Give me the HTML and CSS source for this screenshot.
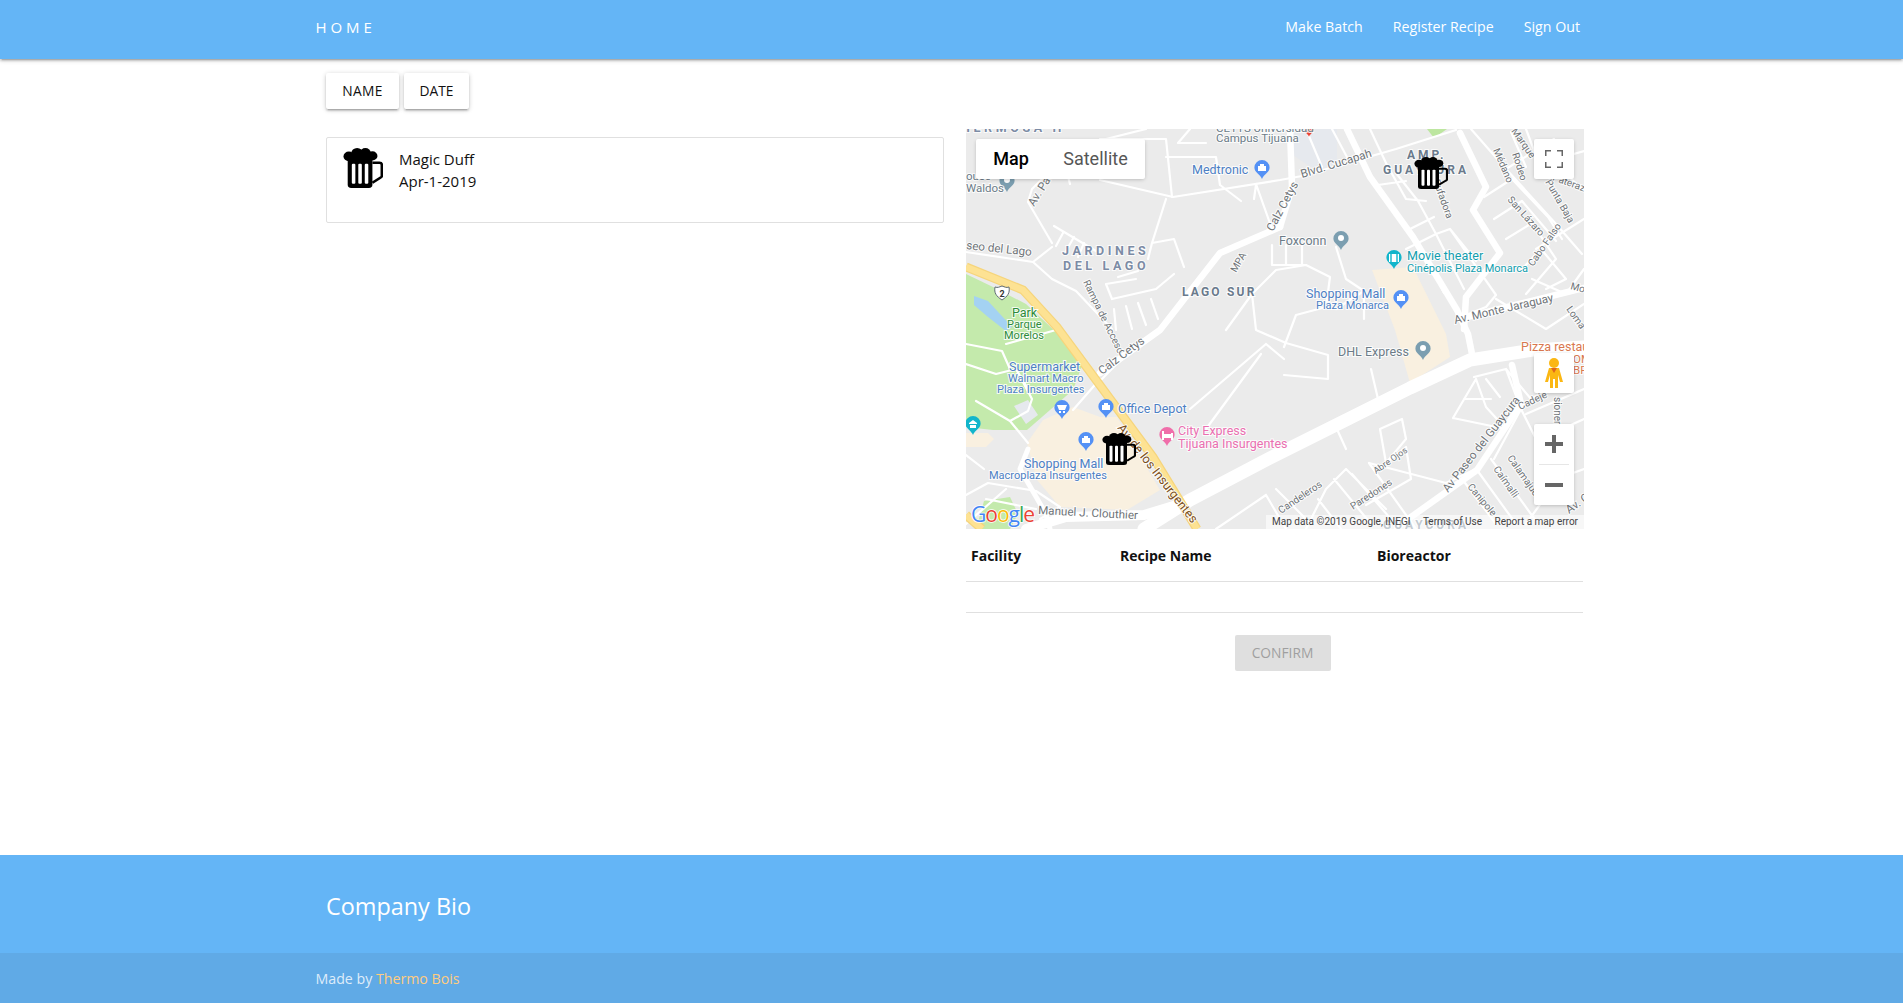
FILE: index.html
```html
<!DOCTYPE html>
<html lang="en">
<head>
<meta charset="utf-8">
<title>Home</title>
<link rel="stylesheet" href="styles.css">
</head>
<body>
<svg class="defs" width="0" height="0" aria-hidden="true">
  <symbol id="beer" viewBox="0 0 34 38" preserveAspectRatio="none">
    <circle cx="5" cy="8" r="4.6"/><circle cx="12" cy="5" r="5"/><circle cx="19" cy="4.6" r="4.6"/><circle cx="25" cy="7.5" r="4.3"/>
    <rect x="4" y="7" width="21" height="31" rx="3"/>
    <rect class="slat" x="7.5" y="15" width="3" height="19" rx="1"/>
    <rect class="slat" x="13" y="15" width="3" height="19" rx="1"/>
    <rect class="slat" x="18.5" y="15" width="3" height="19" rx="1"/>
    <path class="handle" d="M25 14h6a2 2 0 0 1 2 2v10a2 2 0 0 1-1 2l-7 5"/>
  </symbol>
  <symbol id="pin" viewBox="-8 -8 16 20" overflow="visible">
    <path d="M0-8a7.6 7.6 0 0 1 7.6 7.6C7.600 4.600 2 6 0 11-2 6-7.600 4.600-7.600-.4A7.600 7.600 0 0 1 0-8z"/>
  </symbol>
</svg>

<nav class="nav">
  <div class="nav-inner">
    <a class="brand">HOME</a>
    <ul class="nav-links">
      <li>Make Batch</li>
      <li>Register Recipe</li>
      <li>Sign Out</li>
    </ul>
  </div>
</nav>

<main class="main">
  <div class="sort-row">
    <button class="btn">NAME</button>
    <button class="btn">DATE</button>
  </div>
  <div class="columns">
    <section class="left">
      <article class="card">
        <svg class="card-icon"><use href="#beer"/></svg>
        <div class="card-text">
          <div>Magic Duff</div>
          <div>Apr-1-2019</div>
        </div>
      </article>
    </section>
    <section class="right">
      <div class="map">
        <svg class="map-art" viewBox="0 0 618 400" width="618" height="400">
          <rect class="land" width="618" height="400"/>
          <path class="park" d="M0 145 27 158 60 175 91 204 117 234 107 261 61 301 27 301 0 298z"/>
          <path class="park" d="M18 372 44 368 52 385 44 400H10z"/>
          <path class="campus" d="M324 0H371V40L345 38 324 24z"/>
          <path class="parkb" d="M461 0H481L468 9z"/>
          <path class="mall" d="M61 314 77 291 107 278 134 288 151 288 194 361 161 381 94 378 71 351z"/>
          <path class="mall" d="M406 141 447 138 480 205 484 228 444 254 429 201z"/>
          <path class="mall" d="M0 304H22L28 310 20 318H0z"/>
          <path class="water" d="M8 167 22 172 46 198 40 202 22 188 8 176z"/>
          <path class="campus" d="M48 277 62 271 72 286 60 295z"/>

          <g class="road r2">
            <path d="M134 51 207 68 314 51 336 47 430 20 490 1"/>
            <path d="M62 73 86 114M62 73 66 60 78 48 100 40"/>
            <path d="M0 123 67 133 86 118M67 133 86 150 110 162 146 200"/>
            <path d="M100 40 104 55M200 70 186 114 182 130M186 114 208 110 218 138"/>
            <path d="M134 10H200L206 68M200 28H250L254 56 275 72M140 10 180 0M136 20 172 15"/>
            <path d="M290 55 306 100M290 56 288 70M224 0 212 14H240"/>
            <path d="M88 97 130 122M97 104 90 117M108 108 100 122M118 114 112 128"/>
            <path d="M146 170 190 160 208 145M148 180 150 201M160 177 166 200M172 174 180 196M185 170 192 190"/>
            <path d="M146 170 140 155 170 150M152 148 172 142"/>
            <path d="M260 201 286 165 310 141 340 136 364 148 360 178 330 186 318 218M286 165 290 201 320 214 362 226 362 250 318 246"/>
            <path d="M340 136H306V116M320 116V136M336 115V136"/>
            <path d="M370 118 380 150 398 162 398 190M398 162 370 180"/>
            <path d="M0 215 36 222 44 240M0 235 30 245 50 240 62 260M50 240 66 270 62 282 44 292 10 272"/>
            <path d="M40 215 90 201M107 281 134 250M62 314 44 292"/>
            <path d="M0 326 18 340M74 390 94 378 70 362 22 354 0 366M20 370 70 380"/>
            <path d="M224 280 300 215M300 215 318 230M240 300 295 225"/>
            <path d="M340 0 356 38M366 0 382 30M404 0 420 34 440 70 460 72M412 56 440 52M430 44 452 72 470 105M444 100 468 88M440 120 470 105 484 100 530 166 520 178 495 188M470 105 498 160M452 112 478 164M484 100 510 132"/>
            <path d="M505 0 540 40 590 95 616 125M540 40 588 10M545 3 560 38M560 0 572 32M518 68 546 50 582 88 596 110M528 90 556 72 590 112M540 110 566 94 590 130 560 165M556 140 575 120 600 150 580 160"/>
            <path d="M590 30 618 22M600 45 618 62M570 120 618 90M566 150 600 165 618 140M530 170 580 200 618 175"/>
            <path d="M250 400 300 366M340 400 360 360 380 340 420 380M368 350 405 395M386 345 430 396M403 334 450 400M352 370 375 400M300 366 320 400M310 360 345 395"/>
            <path d="M420 334 440 318 445 350 400 376M420 334 414 300 436 290 440 310 420 334"/>
            <path d="M403 334 480 354 510 340"/>
            <path d="M487 289 510 250 520 278 540 300 487 289M498 270 525 270M508 248 540 240 565 270 600 250M520 250 534 268M540 240 555 280 590 350 618 340M560 285 618 260M574 310 618 290M528 330 555 280M575 225H618M585 225 600 245"/>
            <path d="M511 341 550 395M525 330 570 392M496 350 530 395M588 356 560 395"/>
            <path d="M0 395 40 360M370 298 380 320M405 240 412 270M136 250 170 215"/>
          </g>
          <g class="road r8">
            <path d="M381 0 404 48 447 108 491 181 502 205 506 225"/>
            <path d="M134 244 194 201 254 124 314 98"/>
            <path d="M494 4 520 58 507 81 534 124 500 168 498 200"/>
            <path d="M501 188 618 159"/>
            <path d="M431 398 511 341 555 275 546 236"/>
            <path d="M314 98 326 58 324 0"/>
          </g>
          <path class="road r14" d="M178 400 224 371 304 329 444 259 504 231 567 221 618 218"/>
          <path class="road r5" d="M62 320 54 340 80 385 84 400"/>
          <path class="road r10" d="M60 400 100 388 178 386 224 372"/>
          <path class="yellow-edge" d="M0 138 57 161 91 198 187 328 231 400"/>
          <path class="yellow" d="M0 138 57 161 91 198 187 328 231 400"/>
          <path class="yellow-edge" d="M0 386 16 400"/>
          <path class="yellow" d="M0 386 16 400"/>

          <g class="pins">
            <use class="pin-grey" href="#pin" x="33" y="44" width="16" height="20"/>
            <use class="pin-red" href="#pin" x="338" y="-8" width="10" height="20"/>
            <use class="pin-blue" href="#pin" x="288" y="31" width="16" height="20"/>
            <use class="pin-grey" href="#pin" x="367" y="102" width="16" height="20"/>
            <use class="pin-teal" href="#pin" x="420" y="121" width="16" height="20"/>
            <use class="pin-blue" href="#pin" x="427" y="161" width="16" height="20"/>
            <use class="pin-grey" href="#pin" x="449" y="212" width="16" height="20"/>
            <use class="pin-blue" href="#pin" x="88" y="271" width="16" height="20"/>
            <use class="pin-blue" href="#pin" x="132" y="270" width="16" height="20"/>
            <use class="pin-blue" href="#pin" x="112" y="303" width="16" height="20"/>
            <use class="pin-pink" href="#pin" x="193" y="298" width="16" height="20"/>
            <use class="pin-teal" href="#pin" x="-1" y="287" width="16" height="20"/>
            <path class="glyph" d="M292 37h8v5h-8zM294 37v-2h4v2"/>
            <path class="glyph" d="M431 167h8v5h-8zM433 167v-2h4v2"/>
            <path class="glyph" d="M136 276h8v5h-8zM138 276v-2h4v2"/>
            <path class="glyph" d="M116 309h8v5h-8zM118 309v-2h4v2"/>
            <path class="glyph" d="M91 276h10l-2 5h-6zM93 282h2v2h-2zM97 282h2v2h-2z"/>
            <path class="glyph" d="M423 125h10v8h-10z"/>
            <path class="glyph-teal" d="M425 125v8M431 125v8"/>
            <circle class="glyph" cx="375" cy="109" r="3"/>
            <circle class="glyph" cx="41" cy="51" r="3"/>
            <circle class="glyph" cx="457" cy="219" r="3"/>
            <path class="glyph" d="M196 302h2v3h7v-1h2v7h-2v-2h-7v2h-2z"/>
            <path class="glyph" d="M3 294 7 291l4 3v1H3zM4 296h6v3H4z"/>
          </g>
          <g class="shield">
            <path d="M29 158c3 1 4 0 7-1 3 1 4 2 7 1 1 6-1 9-7 13-6-4-8-7-7-13z"/>
            <text class="t-shield" x="36" y="168">2</text>
          </g>

          <g class="labels">
            <text class="t-area" x="-5" y="3">HERMOSA H</text>
            <text class="t-grey s11" x="250" y="3">CETYS Universidad</text>
            <text class="t-grey s11" x="250" y="13">Campus Tijuana</text>
            <text class="t-grey s11" x="0" y="51">ouse</text>
            <text class="t-grey s11" x="0" y="63">Waldos</text>
            <text class="t-area" x="96" y="126">JARDINES</text>
            <text class="t-area" x="97" y="141">DEL LAGO</text>
            <text class="t-area2" x="216" y="167">LAGO SUR</text>
            <text class="t-area2 wide" x="441" y="30">AMP.</text>
            <text class="t-area2 wide" x="417" y="45">GUAYCURA</text>
            <text class="t-blue" x="226" y="45">Medtronic</text>
            <text class="t-slate" x="313" y="116">Foxconn</text>
            <text class="t-teal" x="441" y="131">Movie theater</text>
            <text class="t-teal s115" x="441" y="143">Cinépolis Plaza Monarca</text>
            <text class="t-blue" x="340" y="169">Shopping Mall</text>
            <text class="t-blue s115" x="350" y="180">Plaza Monarca</text>
            <text class="t-slate" x="372" y="227">DHL Express</text>
            <text class="t-orange" x="555" y="222">Pizza restaurant</text>
            <text class="t-orange s11" x="607" y="234">OM</text>
            <text class="t-orange s11" x="607" y="245">BR</text>
            <text class="t-green" x="46" y="188">Park</text>
            <text class="t-green s115" x="41" y="199">Parque</text>
            <text class="t-green s115" x="38" y="210">Morelos</text>
            <text class="t-blue" x="43" y="242">Supermarket</text>
            <text class="t-blue s115" x="42" y="253">Walmart Macro</text>
            <text class="t-blue s115" x="31" y="264">Plaza Insurgentes</text>
            <text class="t-blue" x="152" y="284">Office Depot</text>
            <text class="t-pink" x="212" y="306">City Express</text>
            <text class="t-pink" x="212" y="319">Tijuana Insurgentes</text>
            <text class="t-blue" x="58" y="339">Shopping Mall</text>
            <text class="t-blue s115" x="23" y="350">Macroplaza Insurgentes</text>
            <text class="t-brown" transform="translate(151 299) rotate(52)">Av. de los Insurgentes</text>
            <text class="t-road" transform="translate(68 78) rotate(-58)">Av. Paso</text>
            <text class="t-road" transform="translate(0 120) rotate(6)">seo del Lago</text>
            <text class="t-road s10" transform="translate(117 153) rotate(64)">Rampa de Acceso</text>
            <text class="t-road s10" transform="translate(270 144) rotate(-60)">MPA</text>
            <text class="t-road" transform="translate(136 246) rotate(-37)">Calz Cetys</text>
            <text class="t-road" transform="translate(307 103) rotate(-62)">Calz Cetys</text>
            <text class="t-road" transform="translate(336 49) rotate(-17)">Blvd. Cucapah</text>
            <text class="t-road" transform="translate(489 195) rotate(-13)">Av. Monte Jaraguay</text>
            <text class="t-road s10" transform="translate(527 21) rotate(67)">Médano</text>
            <text class="t-road s10" transform="translate(546 25) rotate(72)">Rodeo</text>
            <text class="t-road s10" transform="translate(541 71) rotate(48)">San Lázaro</text>
            <text class="t-road s10" transform="translate(579 53) rotate(60)">Punta Baja</text>
            <text class="t-road s10" transform="translate(567 138) rotate(-55)">Cabo Falso</text>
            <text class="t-road s10" transform="translate(467 52) rotate(70)">Bufadora</text>
            <text class="t-road s10" transform="translate(586 51) rotate(20)">Paterazo</text>
            <text class="t-road s10" transform="translate(545 2) rotate(55)">Marque</text>
            <text class="t-road s10" transform="translate(604 160) rotate(15)">Mo</text>
            <text class="t-road s10" transform="translate(600 180) rotate(55)">Loma</text>
            <text class="t-road" transform="translate(482 364) rotate(-52)">Av Paseo del Guaycura</text>
            <text class="t-road s10" transform="translate(554 281) rotate(-25)">Cadeje</text>
            <text class="t-road s10" transform="translate(541 329) rotate(55)">Calamajué</text>
            <text class="t-road s10" transform="translate(527 340) rotate(55)">Caímalli</text>
            <text class="t-road s10" transform="translate(501 358) rotate(50)">Canipole</text>
            <text class="t-road s10" transform="translate(387 381) rotate(-33)">Paredones</text>
            <text class="t-road s9" transform="translate(410 345) rotate(-35)">Abre Ojos</text>
            <text class="t-road s10" transform="translate(315 385) rotate(-34)">Candeleros</text>
            <text class="t-road s10" transform="translate(588 268) rotate(90)">sioneros</text>
            <text class="t-road" transform="translate(603 385) rotate(-35)">Av. Coc</text>
            <text class="t-road" transform="translate(72 385) rotate(3)">Manuel J. Clouthier</text>
            <text class="t-area2 wide" x="417" y="400">GUAYCURA</text>
          </g>
          <text class="google" x="5" y="393"><tspan class="g-b">G</tspan><tspan class="g-r">o</tspan><tspan class="g-y">o</tspan><tspan class="g-b">g</tspan><tspan class="g-g">l</tspan><tspan class="g-r">e</tspan></text>
        </svg>

        <svg class="marker marker-a"><use href="#beer"/></svg>
        <svg class="marker marker-b"><use href="#beer"/></svg>

        <div class="map-type">
          <span class="type-on">Map</span>
          <span class="type-off">Satellite</span>
        </div>
        <div class="ctrl ctrl-full">
          <svg viewBox="0 0 18 18" width="18" height="18"><path class="ctrl-ico" d="M0 6V0H6M12 0H18V6M18 12V18H12M6 18H0V12" /></svg>
        </div>
        <div class="ctrl ctrl-peg">
          <svg viewBox="0 0 18 30" width="18" height="30">
            <circle class="peg" cx="9" cy="5" r="5"/>
            <path class="peg" d="M4 10h10l4 14h-3l-2-7v13h-3v-9H8v9H5V17l-2 7H0z"/>
            <path class="peg-neck" d="M6 10h6l-3 5z"/>
          </svg>
        </div>
        <div class="ctrl ctrl-zoom">
          <button class="zoom-btn"><svg viewBox="0 0 18 18" width="18" height="18"><path class="ctrl-solid" d="M7 0h4v7h7v4h-7v7H7v-7H0V7h7z"/></svg></button>
          <span class="zoom-sep"></span>
          <button class="zoom-btn"><svg viewBox="0 0 18 18" width="18" height="18"><path class="ctrl-solid" d="M0 7h18v4H0z"/></svg></button>
        </div>
        <div class="attrib">
          <span>Map data ©2019 Google, INEGI</span>
          <span>Terms of Use</span>
          <span>Report a map error</span>
        </div>
      </div>

      <table class="table">
        <thead>
          <tr><th class="c1">Facility</th><th class="c2">Recipe Name</th><th>Bioreactor</th></tr>
        </thead>
        <tbody>
          <tr><td></td><td></td><td></td></tr>
        </tbody>
      </table>
      <div class="confirm-row"><button class="btn-disabled" disabled>CONFIRM</button></div>
    </section>
  </div>
</main>

<footer class="footer">
  <div class="footer-main"><h5 class="bio">Company Bio</h5></div>
  <div class="copyright">Made by <a class="credit">Thermo Bois</a></div>
</footer>
</body>
</html>
```
FILE: styles.css
```css
* { box-sizing: border-box; }
html, body { margin: 0; padding: 0; }
body {
  width: 1903px;
  height: 1003px;
  overflow: hidden;
  display: flex;
  flex-direction: column;
  background: #fff;
  color: #111;
  font-family: "Open Sans", "Noto Sans", sans-serif;
  font-size: 14.2px;
}
.defs { position: absolute; }

.nav {
  flex: none;
  height: 59px;
  background: #64b5f6;
  box-shadow: 0 2px 2px 0 rgba(0,0,0,.14), 0 3px 1px -2px rgba(0,0,0,.12), 0 1px 5px 0 rgba(0,0,0,.2);
  color: #fff;
}
.nav-inner {
  height: 53px;
  padding: 0 323px 0 315.5px;
  display: flex;
  align-items: center;
  justify-content: space-between;
}
.brand { font-size: 15px; letter-spacing: 3.9px; }
.nav-links { list-style: none; margin: 0; padding: 0; display: flex; gap: 30px; }

.main {
  flex: 1;
  padding: 14px 0 0 326px;
}
.sort-row { display: flex; gap: 5px; height: 36px; }
.btn {
  height: 36px;
  padding: 0 0 1px;
  border: 0;
  border-radius: 2px;
  background: #fff;
  color: #111;
  font: inherit;
  font-size: 13.8px;
  box-shadow: 0 2px 2px 0 rgba(0,0,0,.14), 0 3px 1px -2px rgba(0,0,0,.12), 0 1px 5px 0 rgba(0,0,0,.2);
}
.btn:first-child { width: 73px; letter-spacing: .3px; }
.btn:last-child { width: 65px; }
.columns {
  display: grid;
  grid-template-columns: 618px 618px;
  gap: 22px;
  padding-top: 20px;
}
.left { padding-top: 8px; }
.card {
  height: 86px;
  border: 1px solid #e0e0e0;
  border-radius: 2px;
  display: flex;
  padding: 10px 16px;
  gap: 16px;
}
.card-icon { width: 40px; height: 40px; flex: none; }
.card-text { line-height: 22px; font-size: 15px; }
.slat { fill: #fff; }
.handle { fill: none; stroke: #000; stroke-width: 2.2; }

.map { position: relative; width: 618px; height: 400px; overflow: hidden; }
.map-art { display: block; font-family: Roboto, sans-serif; }
.marker { position: absolute; width: 34px; height: 32px; }
.marker-a { left: 448px; top: 28px; }
.marker-b { left: 136px; top: 304px; }

.land { fill: #ebebeb; }
.park { fill: #c4eaac; }
.parkb { fill: #bde6a0; }
.mall { fill: #f9f0e0; }
.campus { fill: #e6e9ee; }
.water { fill: #a4d2f2; }
.road { fill: none; stroke: #fff; stroke-linejoin: round; stroke-linecap: round; }
.r2 path { stroke-width: 2.2; }
.r5 { stroke-width: 5; }
.r8 { stroke-width: 6.5; }
.r10 { stroke-width: 10; }
.r14 { stroke-width: 13; }
.yellow { fill: none; stroke: #fde293; stroke-width: 6.5; }
.yellow-edge { fill: none; stroke: #f6d57c; stroke-width: 9; }
.pin-grey { fill: #7b9eb0; }
.pin-blue { fill: #5491f5; }
.pin-teal { fill: #12b5cb; }
.pin-pink { fill: #f06eaa; }
.pin-red { fill: #ea4335; }
.glyph { fill: #fff; }
.glyph-teal { stroke: #12b5cb; stroke-width: 1.4; fill: none; }
.shield path { fill: #fff; stroke: #5f6b73; stroke-width: 1; }
.t-shield { font-size: 9px; font-weight: 700; fill: #333; text-anchor: middle; }
.labels text {
  paint-order: stroke;
  stroke: rgba(255,255,255,.85);
  stroke-width: 2px;
  font-size: 12.5px;
}
.labels .t-road { font-size: 11.6px; }
.labels .s115 { font-size: 11px; }
.labels .s11 { font-size: 11.5px; }
.labels .t-road.s10 { font-size: 10px; }
.labels .t-road.s9 { font-size: 9px; }
.t-grey, .t-slate { fill: #6c7c88; }
.labels .t-area { fill: #7c8ba5; font-size: 12.5px; font-weight: 700; letter-spacing: 3.6px; }
.labels .t-area2 { fill: #6a7a8c; font-size: 12px; font-weight: 700; letter-spacing: 2.2px; }
.labels .wide { letter-spacing: 3px; }
.t-blue { fill: #4d7fc4; }
.t-teal { fill: #129eaf; }
.t-orange { fill: #d9784f; }
.t-green { fill: #2e8b3a; }
.t-pink { fill: #ea6fb0; }
.t-brown { fill: #7a4d18; }
.t-road { fill: #6e7377; }
.google { font-family: "Open Sans", sans-serif; font-size: 21px; paint-order: stroke; stroke: #fff; stroke-width: 1.5px; letter-spacing: -1px; }
.g-b { fill: #4285f4; }
.g-r { fill: #ea4335; }
.g-y { fill: #fbbc05; }
.g-g { fill: #34a853; }

.map-type {
  position: absolute;
  left: 10px;
  top: 10px;
  height: 40px;
  display: flex;
  background: #fff;
  border-radius: 2px;
  font-family: Roboto, sans-serif;
  font-size: 18px;
  line-height: 40px;
  box-shadow: 0 1px 4px -1px rgba(0,0,0,.3);
}
.type-on { width: 70px; text-align: center; color: #000; font-weight: 500; }
.type-off { width: 99px; text-align: center; color: #565656; }
.ctrl {
  position: absolute;
  left: 568px;
  width: 40px;
  background: #fff;
  border-radius: 2px;
  box-shadow: 0 1px 4px -1px rgba(0,0,0,.3);
  display: flex;
  flex-direction: column;
  align-items: center;
  justify-content: center;
}
.ctrl-full { top: 10px; height: 40px; }
.ctrl-peg { top: 224px; height: 40px; }
.ctrl-zoom { top: 295px; height: 81px; }
.ctrl-ico { fill: none; stroke: #666; stroke-width: 3; }
.ctrl-solid { fill: #666; }
.peg { fill: #fbb713; }
.peg-neck { fill: #e0661c; }
.zoom-btn { width: 40px; height: 40px; border: 0; padding: 0; background: none; display: flex; align-items: center; justify-content: center; }
.zoom-sep { width: 30px; height: 1px; background: #e6e6e6; }
.attrib {
  position: absolute;
  right: 0;
  bottom: 0;
  width: 318px;
  height: 14px;
  padding: 0 6px;
  background: rgba(255,255,255,.6);
  display: flex;
  justify-content: space-between;
  font-family: Roboto, sans-serif;
  font-size: 10px;
  line-height: 14px;
  color: #444;
}

.table { width: 617px; border-collapse: collapse; }
.table th { height: 52px; padding: 1px 5px 0; text-align: left; font-weight: 700; font-size: 14px; border-bottom: 1px solid #e0e0e0; }
.table td { height: 31px; padding: 0; border-bottom: 1px solid #e0e0e0; }
.c1 { width: 149px; }
.c2 { width: 257px; }
.confirm-row { display: flex; justify-content: center; padding: 22px 0 0 15px; }
.btn-disabled {
  width: 96px;
  height: 36px;
  border: 0;
  border-radius: 2px;
  background: #dfdfdf;
  color: #9f9f9f;
  font: inherit;
  font-size: 13.8px;
}

.footer { flex: none; height: 148px; background: #64b5f6; color: #fff; display: flex; flex-direction: column; }
.footer-main { height: 98px; padding: 3px 0 0 326px; display: flex; align-items: center; }
.bio { margin: 0; font-weight: 400; font-size: 23.4px; }
.copyright { height: 50px; padding-left: 315.5px; line-height: 51px; background: rgba(51,51,51,.08); color: rgba(255,255,255,.8); }
.credit { color: #ffcc80; }
```
